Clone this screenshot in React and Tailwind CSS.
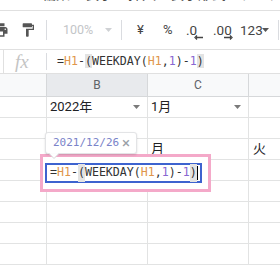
import React from "react";

const cellLine = "border-b border-[#e2e3e3]";

function Formula() {
  return (
    <>
      <span>=</span>
      <span className="text-[#e0954a]">H1</span>
      <span>-</span>
      <span className="bg-[#e3e3e3]">(</span>
      <span>WEEKDAY(</span>
      <span className="text-[#e0954a]">H1</span>
      <span>,</span>
      <span className="text-[#8867d1]">1</span>
      <span>)-</span>
      <span className="text-[#8867d1]">1</span>
      <span className="bg-[#e3e3e3]">)</span>
    </>
  );
}

function Caret({ className }) {
  return (
    <svg width="7" height="4" viewBox="0 0 7 4" className={className}>
      <path d="M0 0h7L3.5 4z" fill="currentColor" />
    </svg>
  );
}

function Row({ b, c, d, bArrow, cArrow }) {
  return (
    <div className={`flex h-[21px] ${cellLine}`}>
      <div className="w-[47px] border-r border-[#e2e3e3]" />
      <div className="w-[101px] border-r border-[#e2e3e3] flex items-center pl-[3px] pr-[7px]">
        <span className="flex-1">{b}</span>
        {bArrow && <Caret className="text-[#7a7a7a]" />}
      </div>
      <div className="w-[101px] border-r border-[#e2e3e3] flex items-center pl-[3px] pr-[7px]">
        <span className="flex-1">{c}</span>
        {cArrow && <Caret className="text-[#7a7a7a]" />}
      </div>
      <div className="flex-1 flex items-center pl-[4px]">{d}</div>
    </div>
  );
}

export default function App() {
  return (
    <div className="relative w-[280px] h-[265px] overflow-hidden bg-white font-['Roboto','Noto_Sans_CJK_JP',sans-serif] text-[#202124]">
      {/* menu bar, only the bottom of the labels shows */}
      <div className="h-[11px] overflow-hidden border-b border-[#e0e0e0]">
        <div className="flex -mt-[15px] text-[14px] leading-[18px] text-[#444] whitespace-nowrap">
          <span className="-ml-[41px]">ファイル</span>
          <span className="ml-[27px]">編集</span>
          <span className="ml-[15px]">表示</span>
          <span className="ml-[15px]">挿入</span>
          <span className="ml-[14px]">表示形式</span>
          <span className="ml-[14px]">データ</span>
        </div>
      </div>

      {/* toolbar */}
      <div className="h-[39px] border-b border-[#e0e0e0] flex items-center text-[#444] whitespace-nowrap">
        <svg width="18" height="18" viewBox="0 0 24 24" className="-ml-[9px] shrink-0 text-[#555]">
          <path
            fill="currentColor"
            d="M19 8H5c-1.66 0-3 1.34-3 3v6h4v4h12v-4h4v-6c0-1.660-1.34-3-3-3zm-3 11H8v-5h8v5zm3-7c-.55 0-1-.45-1-1s.45-1 1-1 1 .45 1 1-.45 1-1 1zm-1-9H6v4h12V3z"
          />
        </svg>
        <svg width="16" height="16" viewBox="0 0 24 24" className="ml-[11px] shrink-0 text-[#555]">
          <path
            fill="currentColor"
            d="M18 4V3c0-.55-.45-1-1-1H5c-.55 0-1 .45-1 1v4c0 .55.45 1 1 1h12c.55 0 1-.45 1-1V6h1v4H9v11c0 .55.45 1 1 1h2c.55 0 1-.45 1-1v-9h8V4h-3z"
          />
        </svg>
        <div className="ml-[10px] w-px h-[20px] bg-[#dadce0] shrink-0" />
        <span className="ml-[16px] w-[42px] shrink-0 text-[12.5px] text-[#c3c5c8]">100%</span>
        <Caret className="shrink-0 text-[#cfd1d4]" />
        <div className="ml-[9px] w-px h-[20px] bg-[#dadce0] shrink-0" />
        <span className="ml-[15px] w-[26px] shrink-0 text-[13px]">¥</span>
        <span className="w-[23px] shrink-0 text-[13px]">%</span>
        <span className="relative w-[27px] shrink-0 text-[13.5px]">
          .0
          <svg width="9" height="5" viewBox="0 0 9 5" className="absolute left-[8px] top-[15px]">
            <path d="M9 2.5H2M3 0.5L1 2.5l2 2" stroke="currentColor" strokeWidth="1.3" fill="none" />
          </svg>
        </span>
        <span className="relative w-[27px] shrink-0 text-[13.5px]">
          .00
          <svg width="9" height="5" viewBox="0 0 9 5" className="absolute left-[11px] top-[15px]">
            <path d="M0 2.5h7M6 0.5l2 2-2 2" stroke="currentColor" strokeWidth="1.3" fill="none" />
          </svg>
        </span>
        <span className="w-[22px] shrink-0 text-[13.5px]">123</span>
        <Caret className="shrink-0 text-[#555]" />
        <div className="ml-[9px] w-px h-[20px] bg-[#dadce0] shrink-0" />
      </div>

      {/* formula bar */}
      <div className="h-[24px] border-b border-[#e0e0e0] flex items-center">
        <div className="ml-[3px] w-px h-full bg-[#e0e0e0]" />
        <div className="w-[42px] pl-[11px] font-['Liberation_Serif',serif] italic text-[19px] leading-none text-[#c4c4c4]">
          fx
        </div>
        <div className="w-px h-[17px] bg-[#dadce0]" />
        <div className="ml-[10px] font-['DejaVu_Sans_Mono',monospace] text-[11.6px] text-[#333] whitespace-nowrap">
          <Formula />
        </div>
      </div>

      {/* column headers */}
      <div className="flex h-[23px] border-b border-[#d6d8da] bg-[#f8f9fa] text-[12px] text-[#5f6368]">
        <div className="w-[47px] border-r border-[#d6d8da]" />
        <div className="w-[101px] border-r border-[#d6d8da] bg-[#e8eaed] flex items-center justify-center">B</div>
        <div className="w-[101px] border-r border-[#d6d8da] flex items-center justify-center">C</div>
        <div className="flex-1" />
      </div>

      {/* grid */}
      <div className="text-[13px]">
        <Row b="2022年" c="1月" bArrow cArrow />
        <Row />
        <Row c="月" d="火" />
        <Row />
        <Row />
        <Row />
        <Row />
        <Row />
      </div>

      {/* highlight frame round the editor */}
      <div className="absolute left-[40px] top-[154px] w-[171px] h-[38px] border-[3px] border-[#f4a9c9] bg-white" />

      {/* in-cell editor */}
      <div className="absolute left-[45px] top-[163px] w-[157px] h-[20px] border-2 border-[#3d63cf] bg-white flex items-center pl-[3px] font-['DejaVu_Sans_Mono',monospace] text-[11.6px] text-[#333] whitespace-nowrap">
        <Formula />
        <span className="w-px h-[14px] bg-black" />
      </div>

      {/* result preview chip */}
      <div className="absolute left-[45px] top-[132px] w-[92px] h-[22px] bg-white border border-[#e3e4e6] rounded-[3px] shadow-[0_1px_2px_rgba(0,0,0,0.15)] flex items-center pl-[7px] pr-[6px]">
        <span className="flex-1 font-['DejaVu_Sans_Mono',monospace] text-[11px] text-[#7a83c9]">2021/12/26</span>
        <span className="text-[15px] leading-none text-[#9aa0a6]">×</span>
      </div>
      <svg width="10" height="6" viewBox="0 0 10 6" className="absolute left-[49px] top-[153px]">
        <path d="M0 0.5L5 5.5 10 0.5" fill="white" stroke="#d4d5d7" strokeWidth="1" />
        <path d="M1 0h8v0.8H1z" fill="white" />
      </svg>
    </div>
  );
}
